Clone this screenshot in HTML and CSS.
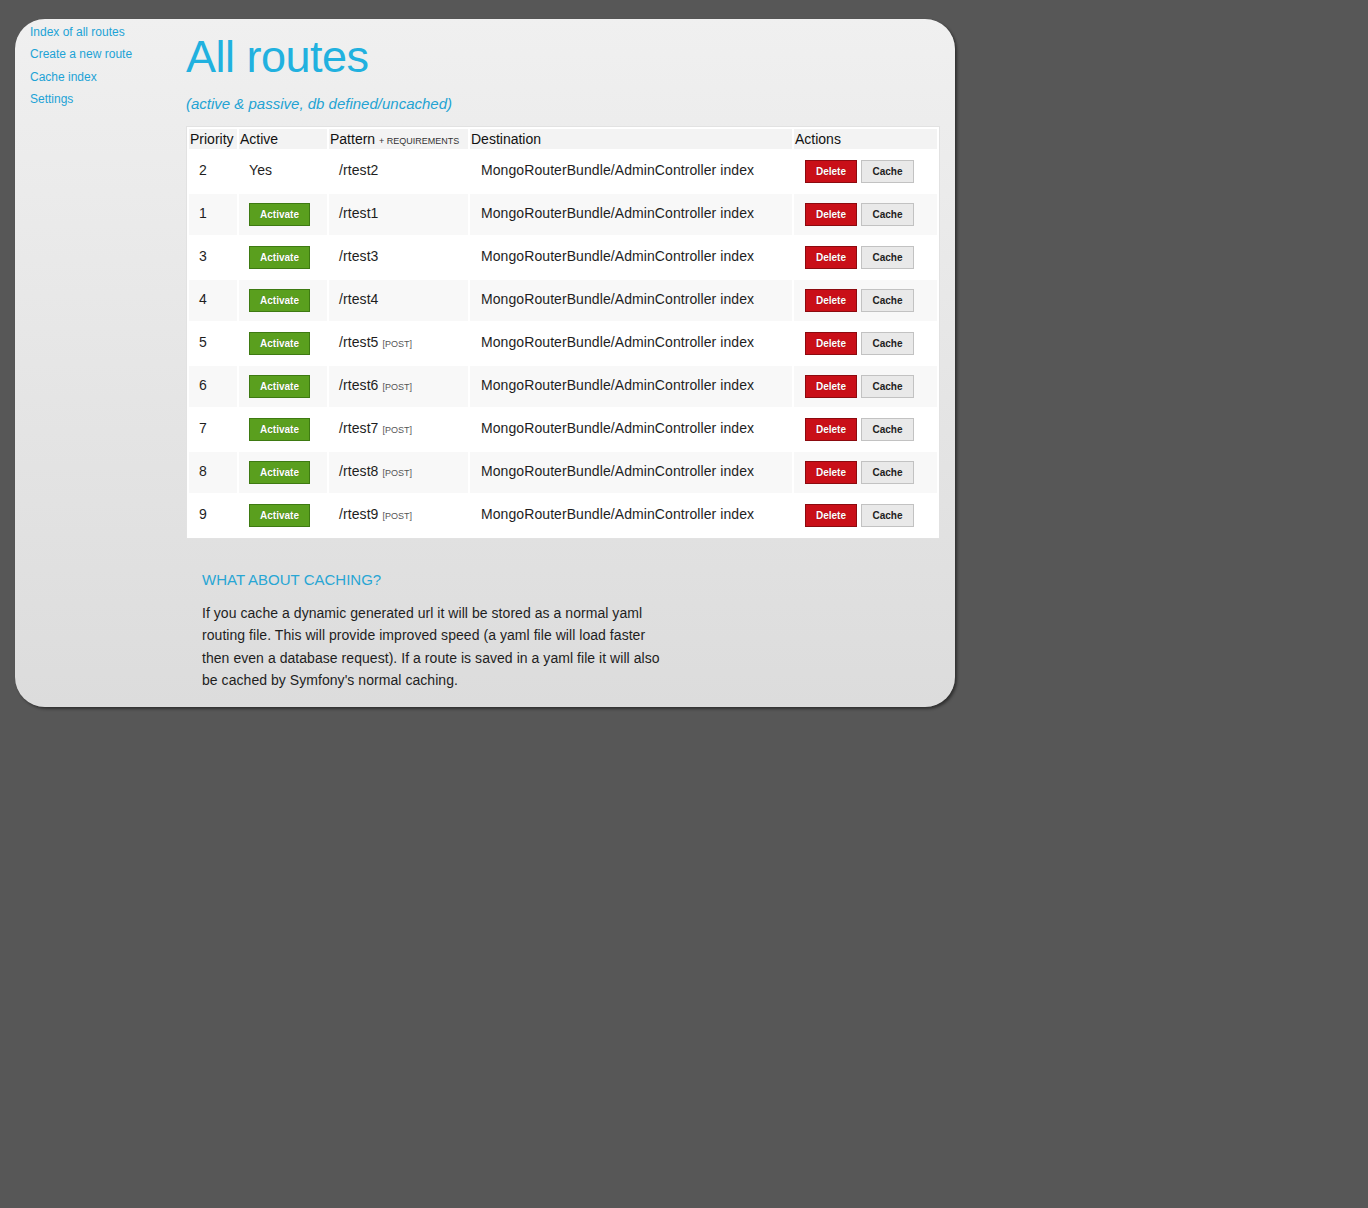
FILE: index.html
```html
<!DOCTYPE html>
<html>
<head>
<meta charset="utf-8">
<title>All routes</title>
<link rel="stylesheet" href="styles.css">
</head>
<body>
<div class="page">
  <nav class="sidebar">
    <a href="#">Index of all routes</a>
    <a href="#">Create a new route</a>
    <a href="#">Cache index</a>
    <a href="#">Settings</a>
  </nav>
  <main class="main">
    <h1 class="title">All routes</h1>
    <p class="subtitle">(active &amp; passive, db defined/uncached)</p>
    <table class="routes">
      <colgroup>
        <col class="c-prio"><col class="c-active"><col class="c-pattern"><col class="c-dest"><col class="c-actions">
      </colgroup>
      <thead>
        <tr><th>Priority</th><th>Active</th><th>Pattern <span class="req">+ Requirements</span></th><th>Destination</th><th>Actions</th></tr>
      </thead>
      <tbody>
        <tr><td>2</td><td>Yes</td><td>/rtest2</td><td class="dest">MongoRouterBundle/AdminController index</td><td class="acts"><button class="btn del">Delete</button> <button class="btn cache">Cache</button></td></tr>
        <tr><td>1</td><td class="bcell"><button class="btn act">Activate</button></td><td>/rtest1</td><td class="dest">MongoRouterBundle/AdminController index</td><td class="acts"><button class="btn del">Delete</button> <button class="btn cache">Cache</button></td></tr>
        <tr><td>3</td><td class="bcell"><button class="btn act">Activate</button></td><td>/rtest3</td><td class="dest">MongoRouterBundle/AdminController index</td><td class="acts"><button class="btn del">Delete</button> <button class="btn cache">Cache</button></td></tr>
        <tr><td>4</td><td class="bcell"><button class="btn act">Activate</button></td><td>/rtest4</td><td class="dest">MongoRouterBundle/AdminController index</td><td class="acts"><button class="btn del">Delete</button> <button class="btn cache">Cache</button></td></tr>
        <tr><td>5</td><td class="bcell"><button class="btn act">Activate</button></td><td>/rtest5 <span class="meth">[POST]</span></td><td class="dest">MongoRouterBundle/AdminController index</td><td class="acts"><button class="btn del">Delete</button> <button class="btn cache">Cache</button></td></tr>
        <tr><td>6</td><td class="bcell"><button class="btn act">Activate</button></td><td>/rtest6 <span class="meth">[POST]</span></td><td class="dest">MongoRouterBundle/AdminController index</td><td class="acts"><button class="btn del">Delete</button> <button class="btn cache">Cache</button></td></tr>
        <tr><td>7</td><td class="bcell"><button class="btn act">Activate</button></td><td>/rtest7 <span class="meth">[POST]</span></td><td class="dest">MongoRouterBundle/AdminController index</td><td class="acts"><button class="btn del">Delete</button> <button class="btn cache">Cache</button></td></tr>
        <tr><td>8</td><td class="bcell"><button class="btn act">Activate</button></td><td>/rtest8 <span class="meth">[POST]</span></td><td class="dest">MongoRouterBundle/AdminController index</td><td class="acts"><button class="btn del">Delete</button> <button class="btn cache">Cache</button></td></tr>
        <tr><td>9</td><td class="bcell"><button class="btn act">Activate</button></td><td>/rtest9 <span class="meth">[POST]</span></td><td class="dest">MongoRouterBundle/AdminController index</td><td class="acts"><button class="btn del">Delete</button> <button class="btn cache">Cache</button></td></tr>
      </tbody>
    </table>
    <section class="about">
      <h2 class="about-title">WHAT ABOUT CACHING?</h2>
      <p class="about-text">If you cache a dynamic generated url it will be stored as a normal yaml routing file. This will provide improved speed (a yaml file will load faster then even a database request). If a route is saved in a yaml file it will also be cached by Symfony's normal caching.</p>
    </section>
  </main>
</div>
</body>
</html>
```
FILE: styles.css
```css
html, body {
  margin: 0;
  padding: 0;
}
body {
  background: #575757;
  font-family: "Liberation Sans", Arial, Helvetica, sans-serif;
  color: #222;
  padding: 19px 0 0 15px;
  min-height: 1208px;
  box-sizing: border-box;
}
.page {
  width: 940px;
  display: flex;
  background: linear-gradient(#f0f0f0, #dcdcdc);
  border-radius: 30px;
  box-shadow: 2px 2px 3px rgba(0, 0, 0, 0.45);
}
.sidebar {
  width: 156px;
  padding: 2px 0 0 15px;
  display: flex;
  flex-direction: column;
}
.sidebar a {
  color: #1da3d6;
  text-decoration: none;
  font-size: 12px;
  line-height: 22.4px;
}
.main {
  flex: 1;
  padding: 11px 15px 15px 0;
}
.title {
  margin: 0;
  font-weight: normal;
  font-size: 45px;
  line-height: 54px;
  color: #21b1df;
  letter-spacing: -0.5px;
}
.subtitle {
  margin: 11px 0 0;
  font-style: italic;
  font-size: 15px;
  line-height: 17px;
  color: #23a3d3;
}
.routes {
  margin-top: 14px;
  width: 754px;
  background: #fff;
  border: 1px solid #e2e2e2;
  border-spacing: 2px;
  table-layout: fixed;
  font-size: 14px;
}
.c-prio { width: 48px; }
.c-active { width: 88px; }
.c-pattern { width: 139px; }
.c-dest { width: 322px; }
.c-actions { width: 143px; }
.routes th {
  background: #f3f3f3;
  text-align: left;
  font-weight: normal;
  color: #111;
  height: 20px;
  padding: 0 0 0 1px;
  line-height: 20px;
  white-space: nowrap;
  vertical-align: middle;
}
.req {
  font-size: 9px;
  line-height: 1;
  text-transform: uppercase;
  color: #333;
}
.routes td {
  height: 41px;
  padding: 0 0 4px 10px;
  box-sizing: border-box;
  vertical-align: middle;
  color: #1e1e1e;
  white-space: nowrap;
  letter-spacing: 0.08px;
}
.routes td.dest { padding-left: 11px; }
.routes td.bcell { padding-bottom: 0; }
.routes td.acts { padding-left: 11px; padding-top: 0; padding-bottom: 1px; }
.routes tbody tr:nth-child(even) td {
  background: #f8f8f8;
}
.meth {
  font-size: 9px;
  color: #555;
  letter-spacing: 0;
}
.btn {
  font-family: "Liberation Sans", Arial, Helvetica, sans-serif;
  font-weight: bold;
  font-size: 10px;
  height: 23px;
  padding: 0;
  margin: 0;
  border-radius: 0;
  cursor: pointer;
  vertical-align: middle;
  letter-spacing: 0;
}
.act {
  width: 61px;
  background: #5a9f1e;
  border: 1px solid #3e7a12;
  color: #fff;
  text-shadow: 0 0 1px rgba(0,0,0,0.3);
}
.del {
  width: 52px;
  background: #c90f18;
  border: 1px solid #8c0a0f;
  color: #fff;
  text-shadow: 0 0 1px rgba(0,0,0,0.3);
}
.cache {
  width: 53px;
  background: #e9e9e9;
  border: 1px solid #c2c2c2;
  color: #222;
}
.about {
  padding: 0 0 0 16px;
}
.about-title {
  margin: 32px 0 0;
  font-weight: normal;
  font-size: 15px;
  line-height: 18px;
  color: #28a6d4;
}
.about-text {
  margin: 13px 0 0;
  width: 465px;
  font-size: 14px;
  line-height: 22.4px;
  color: #1e1e1e;
  letter-spacing: 0.05px;
}
```
